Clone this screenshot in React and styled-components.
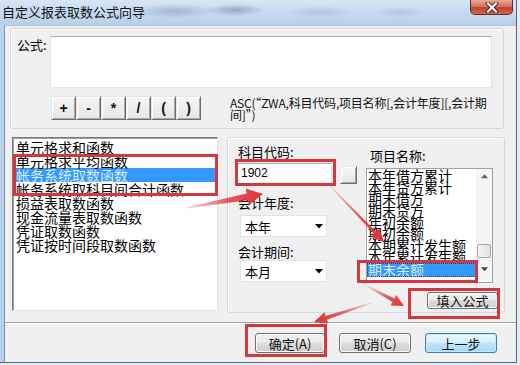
import React from 'react';
import styled, { createGlobalStyle } from 'styled-components';

const UI_FONT = `"Noto Sans CJK SC", "Noto Sans", sans-serif`;

const GlobalStyle = createGlobalStyle`
  html, body {
    margin: 0;
    padding: 0;
    background: #e4edf7;
  }
  body {
    font-family: ${UI_FONT};
  }
`;

const Window = styled.div`
  position: relative;
  width: 517px;
  height: 363px;
  box-sizing: border-box;
  background: linear-gradient(180deg, #cde0f3 0px, #bcd3ea 25px, #b9d0e8 100%);
  border-right: 1px solid #55677b;
  border-bottom: 1px solid #55677b;
  font-family: ${UI_FONT};
  color: #000;
  overflow: hidden;
`;

const TitleBar = styled.div`
  height: 25px;
  display: flex;
  justify-content: space-between;
  align-items: flex-start;
  background:
    radial-gradient(ellipse 40px 7px at 175px 11px, rgba(90, 110, 140, 0.35), transparent),
    radial-gradient(ellipse 30px 6px at 235px 10px, rgba(70, 90, 120, 0.4), transparent),
    radial-gradient(ellipse 35px 6px at 320px 12px, rgba(110, 130, 160, 0.25), transparent),
    radial-gradient(ellipse 25px 5px at 400px 12px, rgba(110, 130, 160, 0.25), transparent),
    linear-gradient(180deg, #d6e6f6 0%, #c2d8ee 60%, #b7cfe8 100%);
`;

const Title = styled.div`
  padding-left: 2px;
  font-size: 13px;
  line-height: 23px;
  color: #111;
  white-space: nowrap;
`;

const CloseButton = styled.div`
  width: 43px;
  height: 15px;
  margin-right: 3px;
  box-sizing: border-box;
  border: 1px solid #6b2a22;
  border-top: none;
  border-radius: 0 0 5px 5px;
  background: linear-gradient(180deg, #e9a797 0%, #d27463 45%, #c0412f 55%, #d2684f 100%);
  display: flex;
  align-items: center;
  justify-content: center;
`;

const Client = styled.div`
  margin-left: 4px;
  width: 512px;
  height: 337px;
  box-sizing: border-box;
  background: #f0f0f0;
  border-top: 1px solid #b4c4d6;
  border-left: 1px solid #7f93a8;
  display: flex;
  flex-direction: column;
`;

const FormulaGroup = styled.div`
  margin: 2px 0 0 5px;
  width: 494px;
  height: 101px;
  box-sizing: border-box;
  border: 1px solid #d0d9e0;
  border-radius: 3px;
  box-shadow: inset 1px 1px 0 #fff;
  padding: 7px 0 0 6px;
  display: grid;
  grid-template-columns: 33px 1fr;
  align-items: start;
`;

const FieldLabel = styled.div`
  font-size: 13px;
  line-height: 14px;
  margin-top: ${p => p.$top || 0}px;
  padding-left: ${p => p.$indent || 0}px;
  white-space: nowrap;
`;

const FormulaBody = styled.div`
  display: flex;
  flex-direction: column;
`;

const FormulaBox = styled.div`
  width: 442px;
  height: 52px;
  box-sizing: border-box;
  background: #fff;
  border: 1px solid;
  border-color: #abadb3 #dbdfe6 #e3e9ef #e2e3ea;
`;

const OpRow = styled.div`
  display: flex;
  align-items: flex-start;
  margin-top: 8px;
`;

const OpButtons = styled.div`
  display: flex;
  margin-left: 1px;
`;

const ClassicButton = styled.div`
  width: ${p => p.$w}px;
  height: ${p => p.$h}px;
  box-sizing: border-box;
  background: linear-gradient(180deg, #f6f6f6, #e6e6e6);
  border: 1px solid;
  border-color: #e6e6e6 #6d6d6d #6d6d6d #e6e6e6;
  box-shadow: inset 1px 1px 0 #fff, inset -1px -1px 0 #a8a8a8;
  display: flex;
  align-items: center;
  justify-content: center;
  font-family: "Liberation Sans", Arial, sans-serif;
  font-weight: bold;
  font-size: 14px;
  color: #111;
`;

const Syntax = styled.div`
  margin: 1px 0 0 29px;
  font-size: 12px;
  line-height: 12px;
  white-space: nowrap;
  letter-spacing: -0.2px;
  color: #111;
`;

const LowerRow = styled.div`
  display: flex;
  gap: 9px;
  margin: 8px 0 0 7px;
`;

const FuncList = styled.div`
  width: 206px;
  height: 174px;
  box-sizing: border-box;
  background: #fff;
  border: 1px solid;
  border-color: #7a7a7a #e3e3e3 #e3e3e3 #7a7a7a;
  box-shadow: inset 1px 1px 0 #a0a0a0;
  padding-top: 2px;
`;

const FuncItem = styled.div`
  height: 14px;
  font-size: 14px;
  line-height: 14px;
  padding-left: 3px;
  white-space: nowrap;
  background: ${p => (p.$selected ? '#3399ff' : 'transparent')};
  color: ${p => (p.$selected ? '#d8ecff' : '#000')};
`;

const ParamGroup = styled.div`
  width: 278px;
  height: 176px;
  box-sizing: border-box;
  border: 1px solid #d0d9e0;
  border-radius: 3px;
  box-shadow: inset 1px 1px 0 #fff;
  padding: 7px 6px 0 8px;
  display: flex;
  flex-direction: column;
`;

const ParamGrid = styled.div`
  display: grid;
  grid-template-columns: 121px 127px;
  column-gap: 9px;
  align-items: start;
`;

const Column = styled.div`
  display: flex;
  flex-direction: column;
`;

const CodeRow = styled.div`
  display: flex;
  align-items: flex-end;
  gap: 8px;
  margin-top: 4px;
`;

const CodeInput = styled.div`
  width: 96px;
  height: 21px;
  box-sizing: border-box;
  background: #fff;
  border: 1px solid;
  border-color: #abadb3 #dbdfe6 #e3e9ef #e2e3ea;
  padding-left: 4px;
  font-family: "Liberation Sans", Arial, sans-serif;
  font-size: 12px;
  line-height: 19px;
`;

const SelectBox = styled.div`
  margin: ${p => p.$top}px 0 0 4px;
  width: 87px;
  height: 22px;
  box-sizing: border-box;
  background: #fff;
  border: 1px solid #e2e2e2;
  padding: 0 3px 0 4px;
  display: flex;
  align-items: center;
  justify-content: space-between;
  font-size: 13px;
`;

const ItemPanel = styled.div`
  margin-top: 5px;
  width: 127px;
  height: 115px;
  box-sizing: border-box;
  background: #fff;
  border: 1px solid #9ea3aa;
  display: flex;
`;

const ItemColumn = styled.div`
  flex: 1;
  min-width: 0;
  display: flex;
  flex-direction: column;
`;

const ItemScroll = styled.div`
  height: 94px;
  overflow: hidden;
  padding: 1px 0 0 1px;
  box-sizing: border-box;
`;

const ItemLine = styled.div`
  font-size: 14px;
  line-height: 11.7px;
  height: 11.7px;
  white-space: nowrap;
`;

const ActiveItem = styled.div`
  height: 14px;
  box-sizing: border-box;
  background: #3399ff;
  color: #d8ecff;
  outline: 1px dotted #1a3c66;
  outline-offset: -1px;
  font-size: 14px;
  line-height: 13px;
  padding-left: 1px;
  white-space: nowrap;
`;

const ScrollBar = styled.div`
  width: 16px;
  display: flex;
  flex-direction: column;
  background: #f5f5f5;
`;

const ScrollArrow = styled.div`
  height: ${p => p.$h}px;
  display: flex;
  align-items: center;
  justify-content: center;
`;

const ScrollTrack = styled.div`
  flex: 1;
  display: flex;
  flex-direction: column;
`;

const ScrollThumb = styled.div`
  margin: 59px 1px 0 1px;
  height: 14px;
  box-sizing: border-box;
  border: 1px solid #a5a5a5;
  border-radius: 2px;
  background: linear-gradient(90deg, #f3f3f3, #e2e2e2);
`;

const FillRow = styled.div`
  display: flex;
  justify-content: flex-end;
  margin-top: 9px;
`;

const PushButton = styled.div`
  width: ${p => p.$w}px;
  height: ${p => p.$h}px;
  box-sizing: border-box;
  border: 1px solid ${p => (p.$default ? '#3c7fb1' : '#707070')};
  border-radius: 3px;
  background: ${p =>
    p.$default
      ? 'linear-gradient(180deg, #eaf6fd 0%, #d9f0fc 45%, #bee6fd 50%, #a7d9f5 100%)'
      : 'linear-gradient(180deg, #f2f2f2 0%, #ebebeb 45%, #dddddd 50%, #cfcfcf 100%)'};
  box-shadow: inset 0 0 0 1px ${p => (p.$default ? '#c8e7f8' : '#fbfbfb')};
  display: flex;
  align-items: center;
  justify-content: center;
  font-size: 13px;
  line-height: 1;
  white-space: nowrap;
  color: #111;
`;

const Separator = styled.div`
  margin-top: 9px;
  height: 2px;
  box-sizing: border-box;
  border-top: 1px solid #a0a0a0;
  border-bottom: 1px solid #fff;
`;

const DialogButtons = styled.div`
  display: flex;
  justify-content: flex-end;
  gap: 14px;
  padding-right: 19px;
  margin-top: 9px;
`;

const Annotations = styled.svg`
  position: absolute;
  left: 0;
  top: 0;
  pointer-events: none;
`;

const Triangle = ({ down, size = 7, color = '#000' }) => (
  <svg width={size} height={Math.ceil(size / 2) + 1} viewBox="0 0 8 5">
    <path d={down ? 'M0 0H8L4 4.5Z' : 'M0 4.5H8L4 0Z'} fill={color} />
  </svg>
);

const arrowPoints = (x1, y1, x2, y2, tail, shaft, headW, headL) => {
  const dx = x2 - x1;
  const dy = y2 - y1;
  const len = Math.hypot(dx, dy);
  const ux = dx / len;
  const uy = dy / len;
  const px = -uy;
  const py = ux;
  const bx = x2 - ux * headL;
  const by = y2 - uy * headL;
  const pts = [
    [x1 + (px * tail) / 2, y1 + (py * tail) / 2],
    [bx + (px * shaft) / 2, by + (py * shaft) / 2],
    [bx + (px * headW) / 2, by + (py * headW) / 2],
    [x2, y2],
    [bx - (px * headW) / 2, by - (py * headW) / 2],
    [bx - (px * shaft) / 2, by - (py * shaft) / 2],
    [x1 - (px * tail) / 2, y1 - (py * tail) / 2],
  ];
  return pts.map(p => p.map(n => n.toFixed(1)).join(',')).join(' ');
};

const arrows = [
  { id: 'a1', from: [186, 208], to: [263, 194], tail: 1, shaft: 7, headW: 17, headL: 16 },
  { id: 'a2', from: [329, 185], to: [384, 242], tail: 1, shaft: 3, headW: 12, headL: 13 },
  { id: 'a3', from: [367, 286], to: [404, 306], tail: 1, shaft: 4, headW: 12, headL: 12 },
  { id: 'a4', from: [371, 303], to: [314, 322], tail: 1, shaft: 4, headW: 12, headL: 13 },
];

const boxes = [
  [14.5, 155.5, 202, 39],
  [236.5, 160.5, 98, 24],
  [358.5, 261.5, 118, 20],
  [409.5, 289.5, 89, 28],
  [246.5, 325.5, 79, 30],
];

const functions = [
  '单元格求和函数',
  '单元格求平均函数',
  '帐务系统取数函数',
  '帐务系统取科目间合计函数',
  '损益表取数函数',
  '现金流量表取数函数',
  '凭证取数函数',
  '凭证按时间段取数函数',
];

const itemNames = [
  '本年借方累计',
  '本年贷方累计',
  '期末借方',
  '期末贷方',
  '年初余额',
  '期初余额',
  '本期累计发生额',
  '本年累计发生额',
  '本年累计发生额',
];

const operators = ['+', '-', '*', '/', '(', ')'];

const App = () => {
  return (
    <>
      <GlobalStyle />
      <Window>
        <TitleBar>
          <Title>自定义报表取数公式向导</Title>
          <CloseButton>
            <svg width="14" height="11" viewBox="0 0 14 11">
              <path d="M3 1.5L11 9.5M11 1.5L3 9.5" stroke="#4a1a14" strokeWidth="4" strokeLinecap="square" />
              <path d="M3 1.5L11 9.5M11 1.5L3 9.5" stroke="#fff" strokeWidth="2.2" strokeLinecap="square" />
            </svg>
          </CloseButton>
        </TitleBar>

        <Client>
          <FormulaGroup>
            <FieldLabel $top={2}>公式:</FieldLabel>
            <FormulaBody>
              <FormulaBox />
              <OpRow>
                <OpButtons>
                  {operators.map(op => (
                    <ClassicButton key={op} $w={25} $h={24}>{op}</ClassicButton>
                  ))}
                </OpButtons>
                <Syntax>
                  ASC(“ZWA,科目代码,项目名称[,会计年度][,会计期
                  <br />
                  间]”)
                </Syntax>
              </OpRow>
            </FormulaBody>
          </FormulaGroup>

          <LowerRow>
            <FuncList>
              {functions.map((f, i) => (
                <FuncItem key={f} $selected={i === 2}>{f}</FuncItem>
              ))}
            </FuncList>

            <ParamGroup>
              <ParamGrid>
                <Column>
                  <FieldLabel $indent={2}>科目代码:</FieldLabel>
                  <CodeRow>
                    <CodeInput>1902</CodeInput>
                    <ClassicButton $w={17} $h={18} />
                  </CodeRow>
                  <FieldLabel $top={12} $indent={2}>会计年度:</FieldLabel>
                  <SelectBox $top={5}>
                    <span>本年</span>
                    <Triangle down size={8} />
                  </SelectBox>
                  <FieldLabel $top={8} $indent={2}>会计期间:</FieldLabel>
                  <SelectBox $top={1}>
                    <span>本月</span>
                    <Triangle down size={8} />
                  </SelectBox>
                </Column>

                <Column>
                  <FieldLabel $top={4} $indent={4}>项目名称:</FieldLabel>
                  <ItemPanel>
                    <ItemColumn>
                      <ItemScroll>
                        {itemNames.map((n, i) => (
                          <ItemLine key={i}>{n}</ItemLine>
                        ))}
                      </ItemScroll>
                      <ActiveItem>期末余额</ActiveItem>
                    </ItemColumn>
                    <ScrollBar>
                      <ScrollArrow $h={17}>
                        <Triangle size={7} color="#606060" />
                      </ScrollArrow>
                      <ScrollTrack>
                        <ScrollThumb />
                      </ScrollTrack>
                      <ScrollArrow $h={26}>
                        <Triangle down size={7} color="#404040" />
                      </ScrollArrow>
                    </ScrollBar>
                  </ItemPanel>
                </Column>
              </ParamGrid>

              <FillRow>
                <PushButton $w={71} $h={17}>填入公式</PushButton>
              </FillRow>
            </ParamGroup>
          </LowerRow>

          <Separator />

          <DialogButtons>
            <PushButton $w={70} $h={20}>确定(A)</PushButton>
            <PushButton $w={72} $h={20}>取消(C)</PushButton>
            <PushButton $w={72} $h={20} $default>上一步</PushButton>
          </DialogButtons>
        </Client>

        <Annotations width="517" height="363" viewBox="0 0 517 363">
          <defs>
            {arrows.map(a => (
              <linearGradient
                key={a.id}
                id={a.id}
                gradientUnits="userSpaceOnUse"
                x1={a.from[0]}
                y1={a.from[1]}
                x2={a.to[0]}
                y2={a.to[1]}
              >
                <stop offset="0" stopColor="#e8474a" stopOpacity="0.2" />
                <stop offset="0.55" stopColor="#e33d40" stopOpacity="0.85" />
                <stop offset="1" stopColor="#dd3236" />
              </linearGradient>
            ))}
          </defs>
          {boxes.map(([x, y, w, h], i) => (
            <rect key={i} x={x} y={y} width={w} height={h} fill="none" stroke="#d4383e" strokeWidth="3" />
          ))}
          {arrows.map(a => (
            <polygon
              key={a.id}
              points={arrowPoints(a.from[0], a.from[1], a.to[0], a.to[1], a.tail, a.shaft, a.headW, a.headL)}
              fill={`url(#${a.id})`}
            />
          ))}
        </Annotations>
      </Window>
    </>
  );
};

export default App;
